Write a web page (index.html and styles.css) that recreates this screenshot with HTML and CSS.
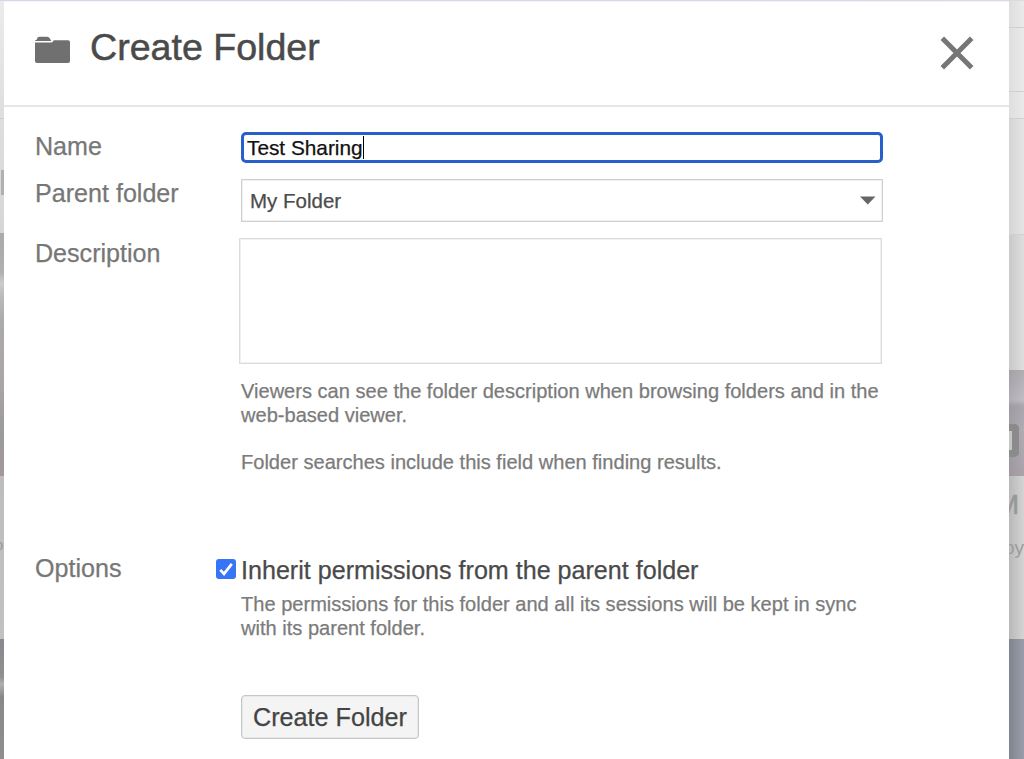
FILE: index.html
```html
<!DOCTYPE html>
<html lang="en">
<head>
<meta charset="utf-8">
<title>Create Folder</title>
<link rel="stylesheet" href="styles.css">
</head>
<body>
<div class="page">
  <div class="backdrop backdrop-left">
    <div class="left-head"></div>
    <div class="left-gap"><span class="left-mark"></span></div>
    <div class="left-thumb"></div>
    <div class="left-caption"><span>o</span></div>
    <div class="left-thumb-next"></div>
  </div>
  <main class="dialog">
    <header class="dialog-header">
      <svg class="folder-icon" width="36" height="28" viewBox="0 0 36 28"><path fill="#707070" d="M2 3.6Q2 .8 4.5 .8H12.2Q14 .8 14.7 2.3L16.3 4.9H0Q.2 3.8 2 3.6ZM0 6.6H16.3Q17.6 6.3 18.8 4.2H33Q35 4.2 35 6.3V25Q35 27 33 27H2Q0 27 0 25Z"/></svg>
      <h1>Create Folder</h1>
      <svg class="close-icon" width="34" height="34" viewBox="0 0 34 34"><path d="M2.3 2.3 31.7 31.7M31.7 2.3 2.3 31.7" stroke="#767676" stroke-width="5"/></svg>
    </header>
    <form class="form">
      <div class="row row-name">
        <label>Name</label>
        <div class="text-input">Test Sharing<span class="caret"></span></div>
      </div>
      <div class="row row-parent">
        <label>Parent folder</label>
        <div class="select">My Folder<svg width="16" height="9" viewBox="0 0 16 9"><path fill="#666" d="M0 .5H15.5L7.75 8.5Z"/></svg></div>
      </div>
      <div class="row row-description">
        <label>Description</label>
        <div class="description">
          <div class="textarea"></div>
          <p class="hint">Viewers can see the folder description when browsing folders and in the<br>web-based viewer.</p>
          <p class="hint hint-second">Folder searches include this field when finding results.</p>
        </div>
      </div>
      <div class="row row-options">
        <label>Options</label>
        <div class="options">
          <div class="check-line">
            <svg class="checkbox" width="20" height="20" viewBox="0 0 20 20"><rect width="20" height="20" rx="3" fill="#3575f6"/><path d="M4.3 10.8 8 14.8 15.8 4.8" fill="none" stroke="#fff" stroke-width="2.7"/></svg>
            <span>Inherit permissions from the parent folder</span>
          </div>
          <p class="hint">The permissions for this folder and all its sessions will be kept in sync<br>with its parent folder.</p>
        </div>
      </div>
      <button type="button" class="submit">Create Folder</button>
    </form>
  </main>
  <div class="backdrop backdrop-right">
    <div class="bar bar-a"></div>
    <div class="bar bar-b"></div>
    <div class="bar bar-c"></div>
    <div class="bar bar-d"></div>
    <div class="right-gap"></div>
    <div class="right-thumb"><span class="badge"></span></div>
    <div class="right-caption"><span class="cap-title">M</span><span class="cap-by">by</span></div>
    <div class="right-thumb-next"></div>
  </div>
</div>
</body>
</html>
```
FILE: styles.css
```css
* { box-sizing: border-box; }
body {
  margin: 0;
  font-family: "Liberation Sans", Arial, sans-serif;
  background: #fff;
}
.page {
  display: flex;
  width: 1024px;
  height: 759px;
  overflow: hidden;
  padding-top: 1px;
  background: linear-gradient(90deg, #d8d5e8, #ded8e4);
}
.backdrop {
  display: flex;
  flex-direction: column;
  overflow: hidden;
  color: #999;
}
.backdrop-left { width: 4px; flex: none; }
.left-head { flex: 0 0 118px; background: linear-gradient(#ebebeb, #dedede); border-bottom: 1px solid #cecece; }
.left-gap { flex: 0 0 114px; padding: 51px 0 0 1px; background: linear-gradient(#dedede, #d6d6d6); }
.left-mark { display: block; height: 25px; background: #b0b0b0; }
.left-thumb { flex: 0 0 243px; background: linear-gradient(#aaa9ac 0, #b0afb1 40px, #ccc 50px, #bcbabc 62px, #aca9ab 90px, #aaa4a6 150px, #9c9a9c 200px, #a2989c); }
.left-caption { flex: 0 0 163px; padding-top: 60px; background: linear-gradient(#bebdbd, #c1c1c1); font-size: 15px; line-height: 18px; }
.left-caption span { margin-left: -5px; }
.left-thumb-next { flex: 1; background: linear-gradient(#88898c, #909093 38px, #b0b0b0 45px, #88888a 58px, #918d8e); }
.dialog {
  width: 1005px;
  flex: none;
  border-top: 1px solid #f5f4f9;
  background: #fff;
}
.dialog-header {
  display: flex;
  align-items: flex-start;
  height: 105px;
  border-bottom: 2px solid #e6e6e6;
  padding: 0 35px 0 31px;
}
.folder-icon { margin-top: 34px; }
.close-icon { margin: 34px 0 0 auto; }
h1 {
  margin: 23px 0 0 19px;
  font-size: 37.6px;
  line-height: 44px;
  font-weight: 400;
  color: #4a4a4a;
  -webkit-text-stroke: .5px #4a4a4a;
  white-space: nowrap;
}
.form {
  padding: 25px 0 0 31px;
  font-size: 25.1px;
  -webkit-text-stroke: .25px;
}
.row {
  display: grid;
  grid-template-columns: 206px 642px;
  align-items: start;
}
.row label { margin-top: -1px; color: #777; line-height: 30px; }
.row-name { height: 47px; }
.text-input {
  display: flex;
  align-items: center;
  height: 31px;
  border: 3px solid #285fcb;
  border-radius: 5px;
  padding-left: 3px;
  font-size: 20.8px;
  color: #111;
}
.caret { width: 1px; height: 23px; background: #000; }
.row-parent { height: 60px; }
.select {
  display: flex;
  align-items: center;
  justify-content: space-between;
  height: 43px;
  border: 1px solid #cfcfcf;
  box-shadow: inset 0 0 0 1px #f0f0f0;
  padding: 0 6px 0 8px;
  font-size: 20.5px;
  color: #4c4c4c;
}
.row-description { height: 315px; }
.textarea {
  width: 643px;
  height: 126px;
  margin: -1px 0 16px -2px;
  border: 1px solid #dcdcdc;
  box-shadow: inset 0 0 0 1px #f0f0f0;
}
.hint {
  margin: 0;
  color: #7b7b7b;
  font-size: 20.07px;
  line-height: 23.5px;
  white-space: nowrap;
}
.hint-second { margin-top: 24px; }
.row-options { height: 141px; }
.check-line {
  display: flex;
  align-items: center;
  height: 30px;
  gap: 5px;
  margin: 1px 0 8px -25px;
  color: #4a4a4a;
  font-size: 25.1px;
  white-space: nowrap;
}
.checkbox { margin-top: -2px; }
.submit {
  display: block;
  width: 178px;
  height: 44px;
  margin-left: 206px;
  padding: 0;
  border: 1px solid #c6c6c6;
  box-shadow: inset 0 0 0 1px #e9e9e9;
  border-radius: 4px;
  background: #f4f4f4;
  color: #444;
  font: 25.2px "Liberation Sans", Arial, sans-serif;
}
.backdrop-right { flex: 1; }
.bar { flex: none; background: linear-gradient(90deg, #dedede, #eaeaea); border-bottom: 1px solid #d0d0d0; }
.bar-a { height: 27px; }
.bar-b { height: 64px; }
.bar-c { height: 27px; }
.bar-d { height: 116px; background: linear-gradient(90deg, #d4d4d4, #e5e5e5); }
.right-gap { flex: 0 0 135px; background: linear-gradient(90deg, #c9c9c9, #dedede); }
.right-thumb {
  flex: 0 0 106px;
  padding-top: 54px;
  background: linear-gradient(90deg, rgba(80, 80, 85, .15), transparent), linear-gradient(#b1adb3, #bab7be 18px, #c0bfc6 30px, #aaa7ad 36px, #b0acb3 60px, #aaa3aa);
}
.badge {
  display: block;
  width: 10px;
  height: 33px;
  border: 7px solid #8b8b8b;
  border-left: 0;
  border-radius: 0 5px 5px 0;
  background: #c6c6c6;
}
.right-caption {
  display: flex;
  flex-direction: column;
  align-items: flex-end;
  flex: 0 0 163px;
  padding-top: 14px;
  background: linear-gradient(90deg, #b8b8b8, #d4d4d4);
}
.cap-title { font-size: 28px; line-height: 30px; margin-right: 5px; color: #999; -webkit-text-stroke: .6px #999; }
.cap-by { font-size: 19px; line-height: 22px; margin-top: 17px; color: #9c9c9c; }
.right-thumb-next { flex: 1; background: linear-gradient(90deg, #80848e, #9a9da9); }
```
